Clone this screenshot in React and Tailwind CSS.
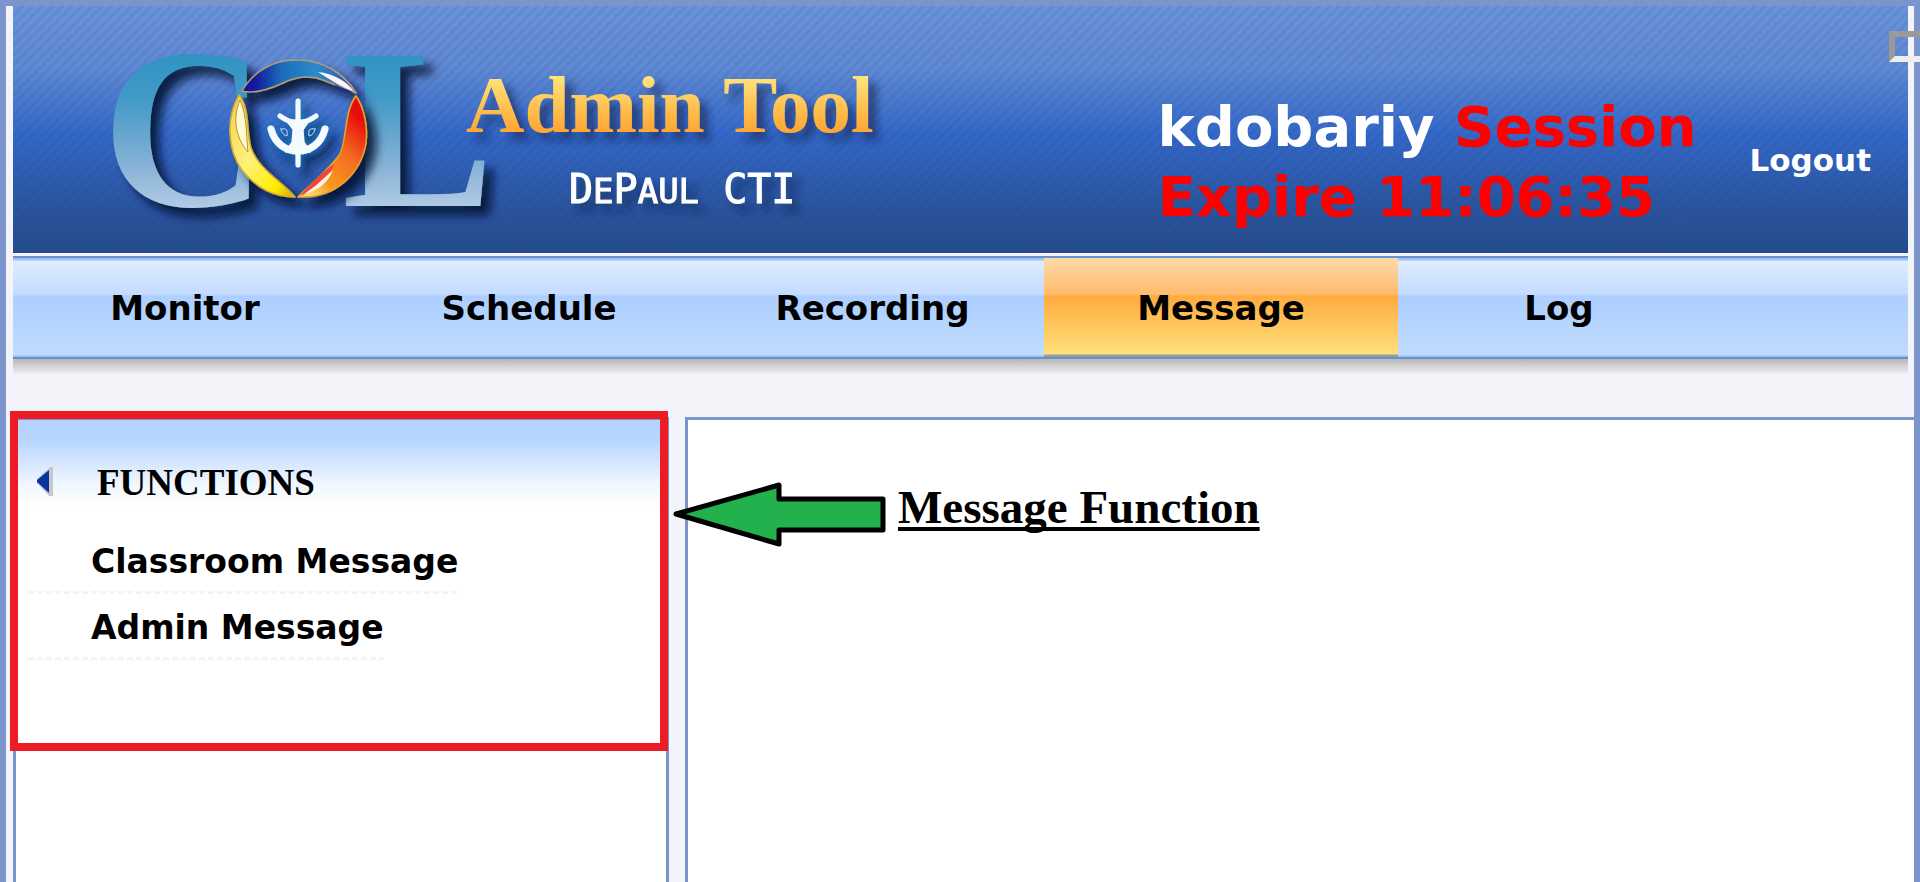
const navItems = [
  { label: "Monitor" },
  { label: "Schedule" },
  { label: "Recording" },
  { label: "Message", active: true },
  { label: "Log" },
];

const functionLinks = ["Classroom Message", "Admin Message"];

function Logo() {
  return (
    <svg width="800" height="247" viewBox="100 6 800 247" className="shrink-0 overflow-visible" role="img" aria-label="COL Admin Tool, DePaul CTI">
      <defs>
        <linearGradient id="letter" gradientUnits="userSpaceOnUse" x1="0" y1="52" x2="0" y2="210">
          <stop offset="0" stopColor="#2e93c3" />
          <stop offset="0.3" stopColor="#429ac6" />
          <stop offset="0.7" stopColor="#84b0d6" />
          <stop offset="1" stopColor="#b4cce6" />
        </linearGradient>
        <linearGradient id="gold" gradientUnits="userSpaceOnUse" x1="0" y1="78" x2="0" y2="130">
          <stop offset="0" stopColor="#ffe27a" />
          <stop offset="1" stopColor="#ffa733" />
        </linearGradient>
        <linearGradient id="blueArc" x1="0" y1="0" x2="1" y2="0">
          <stop offset="0.1" stopColor="#14149a" />
          <stop offset="0.35" stopColor="#1c6cba" />
          <stop offset="0.65" stopColor="#2a8cca" />
          <stop offset="1" stopColor="#2a4cb0" />
        </linearGradient>
        <linearGradient id="orangeArc" x1="0.8" y1="0" x2="0.2" y2="1">
          <stop offset="0.1" stopColor="#e60a0a" />
          <stop offset="0.45" stopColor="#f56a22" />
          <stop offset="0.8" stopColor="#f79a1c" />
          <stop offset="1" stopColor="#f8e070" />
        </linearGradient>
        <linearGradient id="yellowArc" x1="0" y1="0" x2="0.9" y2="1">
          <stop offset="0" stopColor="#f0d050" />
          <stop offset="0.5" stopColor="#fff27a" />
          <stop offset="0.85" stopColor="#ffee00" />
          <stop offset="1" stopColor="#d8b800" />
        </linearGradient>
        <filter id="deep" x="-20%" y="-20%" width="150%" height="150%">
          <feDropShadow dx="9" dy="9" stdDeviation="5" floodColor="#04102e" floodOpacity="0.85" />
        </filter>
        <filter id="soft" x="-20%" y="-20%" width="150%" height="160%">
          <feDropShadow dx="8" dy="8" stdDeviation="4" floodColor="#0a1c48" floodOpacity="0.6" />
        </filter>
        <filter id="glow" x="-40%" y="-40%" width="180%" height="180%">
          <feDropShadow dx="0" dy="0" stdDeviation="3" floodColor="#1478c0" floodOpacity="1" />
          <feDropShadow dx="7" dy="8" stdDeviation="4" floodColor="#04102e" floodOpacity="0.6" />
        </filter>
      </defs>

      <g fontFamily="Liberation Serif, serif" fontWeight="700">
        <g fontSize="228" fill="url(#letter)" filter="url(#deep)">
          <text x="102" y="206">C</text>
          <text x="342" y="206">L</text>
        </g>
        <text x="466" y="132" fontSize="81" fill="url(#gold)" filter="url(#soft)">Admin Tool</text>
      </g>
      <text x="569" y="203" fontSize="40" fill="#ffffff" stroke="#ffffff" fontFamily="DejaVu Sans Mono, monospace" filter="url(#soft)">
        D<tspan fontSize="34">E</tspan>P<tspan fontSize="34">AUL</tspan> CTI
      </text>

      <g filter="url(#deep)" strokeWidth="1.5" strokeLinejoin="round">
        <path d="M242 91 C254 70 276 59 298 60 C322 60 344 73 356 93 C345 89 333 84 323 80 C310 75 296 77 283 83 C268 90 255 94 242 91Z" fill="url(#blueArc)" stroke="#b89a72" />
        <path d="M356 96 C364 108 368 126 366 143 C361 174 335 199 298 197 C312 182 329 170 340 154 C347 139 344 112 356 96Z" fill="url(#orangeArc)" stroke="#e8a828" />
        <path d="M239 95 C225 119 228 151 242 170 C256 188 274 197 295 197 C282 181 259 170 251 148 C246 130 250 108 239 95Z" fill="url(#yellowArc)" stroke="#d8ac30" />
      </g>
      <path d="M318 72 C333 73 348 82 354 92 C342 87 330 80 318 72Z" fill="#fff4ee" />
      <path d="M334 84 C342 88 349 90 354 92 C345 92 338 89 334 84Z" fill="#2828a0" />
      <path d="M300 196 C306 188 320 173 334 164 C330 178 318 190 300 196Z" fill="#ec4a38" />
      <path d="M304 194 C314 188 324 178 333 170 C328 183 318 191 304 194Z" fill="#fff0e2" />
      <path d="M240 100 C232 118 236 139 248 152 C246 132 247 116 240 100Z" fill="#fffad0" stroke="#b89040" strokeWidth="1" />

      <g fill="none" stroke="#f4fbff" strokeLinecap="round" filter="url(#glow)">
        <path d="M298 101 V165" strokeWidth="5" />
        <path d="M280 116 Q288 122 298 123 Q308 122 316 116" strokeWidth="5" />
        <path d="M271 129 C275 144 286 151 298 151 C310 151 321 144 325 129" strokeWidth="7" />
        <path d="M286 120 H310 L303 130 L304 142 L311 152 H285 L292 142 L293 130Z" fill="#f4fbff" strokeWidth="1" />
        <path d="M281 129 Q289 127 287 136 Q282 135 281 129Z M315 129 Q307 127 309 136 Q314 135 315 129Z" stroke="#a8d0ee" strokeWidth="1" />
      </g>
    </svg>
  );
}

function Header() {
  return (
    <header className="relative flex items-start justify-between bg-[repeating-linear-gradient(135deg,rgba(20,60,140,0.12)_0px,rgba(20,60,140,0)_3px,rgba(20,60,140,0)_4px,rgba(20,60,140,0.12)_7px),linear-gradient(180deg,#6c94da_0%,#608ad2_25%,#3468c8_52%,#2b559f_80%,#264c8c_100%)] pl-[87px]">
      <Logo />
      <div className="flex items-center gap-8 pt-[86px] pr-[37px]">
        <h2 className="w-[560px] text-[56px] leading-[70px] font-bold text-white">
          kdobariy <span className="text-[#ff0000]">Session Expire 11:06:35</span>
        </h2>
        <a href="#logout" className="pb-1 text-[31px] leading-9 font-bold text-white">
          Logout
        </a>
      </div>
      <div className="absolute top-[25px] -right-3 h-[31px] w-[31px] border-6 border-r-0 border-[#9a9a9a] border-b-[#eeeeee]" />
    </header>
  );
}

function Nav() {
  return (
    <>
      <nav className="mt-[3px] grid grid-cols-[344fr_344fr_343fr_354fr_322fr_188fr] border-y-2 border-[#6591cf] bg-[linear-gradient(180deg,#9fbfe8_0px,#9fbfe8_2px,#e0ecff_3px,#c4dcff_36px,#adcfff_38px,#c0dbff_97px,#9fbfe8_98px)]">
        {navItems.map(({ label, active }) => (
          <a
            key={label}
            href={`#${label.toLowerCase()}`}
            aria-current={active ? "page" : undefined}
            className={
              "flex h-[99px] items-center justify-center text-[34px] leading-10 font-bold text-black " +
              (active ? "bg-[linear-gradient(180deg,#ffd9a8_0px,#ffbb6e_36px,#ffab3f_38px,#ffe07a_96px,#8f9f9f_97px)]" : "")
            }
          >
            {label}
          </a>
        ))}
      </nav>
      <div className="h-4 bg-linear-to-b from-[#b8b8b6] to-[#f3f4fa]" />
    </>
  );
}

function Sidebar() {
  return (
    <aside className="relative w-[656px] shrink-0 border-3 border-b-0 border-[#7b94cb] bg-white">
      <div className="flex h-[86px] items-center bg-[linear-gradient(180deg,#b1d3ff_0%,#b8d7ff_25%,#d6e6ff_50%,#f0f7ff_75%,#ffffff_100%)] pt-10 pl-5">
        <button type="button" aria-label="Collapse functions" className="w-[61px] pb-1">
          <svg width="17" height="29" viewBox="0 0 17 29">
            <path d="M14 0 H17 V29 H13 L1 16 V12Z" fill="#c8c8cc" />
            <path d="M13 3 V26 L1 15 V13Z" fill="#0a349c" />
          </svg>
        </button>
        <h2 className="font-['Liberation_Serif',serif] text-[37px] leading-10 font-bold">FUNCTIONS</h2>
      </div>
      <ul className="flex flex-col items-start gap-3 pt-[34px] pl-3">
        {functionLinks.map((label) => (
          <li key={label} className="pb-2.5 bg-[repeating-linear-gradient(90deg,#f4f4f4_0px,#f4f4f4_6px,transparent_6px,transparent_9px)] bg-[length:100%_3px] bg-bottom bg-no-repeat pl-[63px]">
            <a href="#message" className="block text-[33px] leading-11 font-bold">
              {label}
            </a>
          </li>
        ))}
      </ul>
      <div className="pointer-events-none absolute -top-[9px] -right-[2px] -left-[6px] h-[340px] border-8 border-[#ed1c24]" />
    </aside>
  );
}

function Main() {
  return (
    <main className="relative ml-4 grow border-t-3 border-l-3 border-[#7b94cb] bg-white pt-15 pl-[210px]">
      <h1 className="font-['Liberation_Serif',serif] text-[47px] leading-[54px] font-bold underline decoration-4 underline-offset-4 [text-decoration-skip-ink:none]">
        Message Function
      </h1>
      <svg className="absolute top-[61px] -left-[18px]" width="218" height="68" viewBox="0 0 218 68">
        <path d="M6 33 L109 4 V18 H213 V49 H109 V63Z" fill="#22b14c" stroke="#000000" strokeWidth="5" strokeLinejoin="round" />
      </svg>
    </main>
  );
}

export default function App() {
  return (
    <div className="flex min-h-screen flex-col border-6 border-b-0 border-[#7b94cb] bg-[#f3f4fa] font-['DejaVu_Sans',Verdana,sans-serif] text-black">
      <div className="mr-1.5 ml-[7px]">
        <Header />
        <Nav />
      </div>
      <div className="mt-[42px] ml-[7px] flex grow">
        <Sidebar />
        <Main />
      </div>
    </div>
  );
}
